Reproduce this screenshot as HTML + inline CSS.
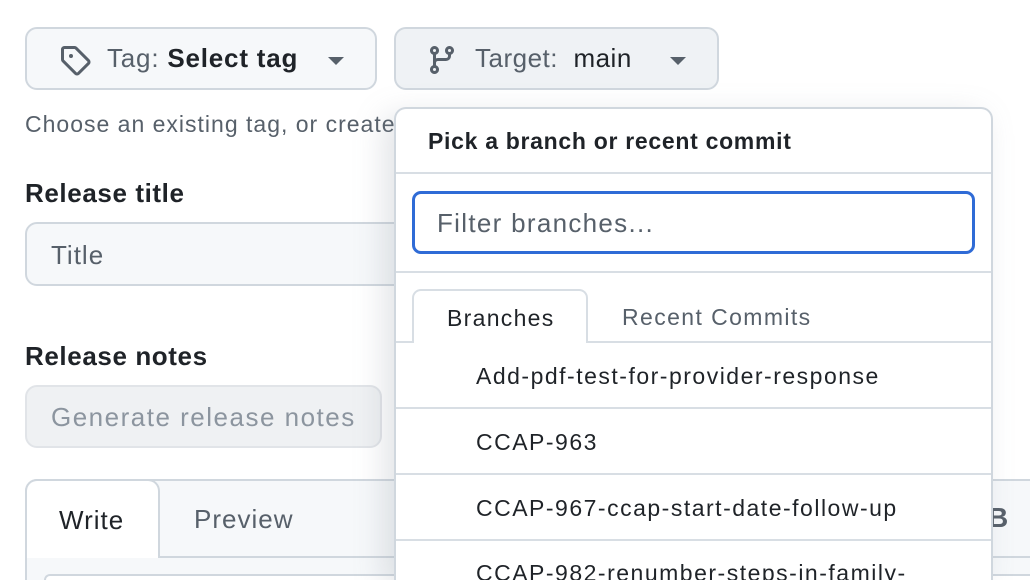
<!DOCTYPE html>
<html style="width:1030px;height:580px;overflow:hidden"><head><meta charset="utf-8"><style>
*{box-sizing:border-box;margin:0;padding:0}
body{width:1030px;height:580px;overflow:hidden;background:#fff;font-family:"Liberation Sans",sans-serif;position:relative;color:#1f2328;white-space:nowrap}
.abs{position:absolute}
.btn{position:absolute;border:2px solid #d0d7de;border-radius:12px;background:#f6f8fa;display:flex;align-items:center;font-size:26px;letter-spacing:.5px}
.caret{width:0;height:0;border-left:8px solid transparent;border-right:8px solid transparent;border-top:8px solid #57606a;position:absolute}
.lbl{position:absolute;font-weight:bold;font-size:26px;left:25px;letter-spacing:.6px}
.pop{position:absolute;left:394px;top:107px;width:599px;height:473px;background:#fff;border:2px solid #d0d7de;border-bottom:none;border-radius:12px 12px 0 0;box-shadow:-10px 8px 30px rgba(140,149,159,.25);overflow:hidden}
.sep{position:absolute;left:0;right:0;height:2px;background:#d8dee4}
.item{position:absolute;left:80px;font-size:23px;letter-spacing:1.5px;color:#1f2328}
</style></head><body>
<div class="btn" style="left:25px;top:27px;width:352px;height:63px">
<svg class="abs" style="left:32px;top:15px" width="32" height="32" viewBox="0 0 16 16"><path fill="#57606a" d="M1 7.775V2.75C1 1.784 1.784 1 2.75 1h5.025c.464 0 .91.184 1.238.513l6.25 6.25a1.75 1.75 0 0 1 0 2.474l-5.026 5.026a1.75 1.75 0 0 1-2.474 0l-6.25-6.25A1.752 1.752 0 0 1 1 7.775Zm1.5 0c0 .066.026.13.073.177l6.25 6.250a.25.25 0 0 0 .354 0l5.025-5.025a.25.25 0 0 0 0-.354l-6.25-6.25a.25.25 0 0 0-.177-.073H2.75a.25.25 0 0 0-.25.25ZM6 5a1 1 0 1 1 0 2 1 1 0 0 1 0-2Z"/></svg>
<span class="abs" style="left:80px;top:14px;color:#57606a;letter-spacing:.8px">Tag: <span style="color:#1f2328;font-weight:bold">Select tag</span></span>
<div class="caret" style="left:301px;top:28px"></div></div>
<div class="btn" style="left:394px;top:27px;width:325px;height:63px;background:#eff2f5">
<svg class="abs" style="left:30px;top:15px" width="32" height="32" viewBox="0 0 16 16"><path fill="#57606a" d="M9.5 3.25a2.25 2.25 0 1 1 3 2.122V6A2.5 2.5 0 0 1 10 8.5H6a1 1 0 0 0-1 1v1.128a2.251 2.251 0 1 1-1.5 0V5.372a2.25 2.250 0 1 1 1.5 0v1.836A2.493 2.493 0 0 1 6 7h4a1 1 0 0 0 1-1v-.628A2.25 2.25 0 0 1 9.5 3.25Zm-6 0a.75.75 0 1 0 1.5 0 .75.75 0 0 0-1.5 0Zm8.25-.75a.75.75 0 1 0 0 1.5.75.75 0 0 0 0-1.5ZM4.25 12a.75.75 0 1 0 0 1.5.75.75 0 0 0 0-1.5Z"/></svg>
<span class="abs" style="left:79px;top:14px;color:#57606a">Target:&nbsp; <span style="color:#1f2328">main</span></span>
<div class="caret" style="left:274px;top:28px"></div></div>
<div class="abs" style="left:25px;top:111px;font-size:23px;letter-spacing:1px;color:#57606a">Choose an existing tag, or create a new tag</div>
<div class="lbl" style="top:178px">Release title</div>
<div class="abs" style="left:25px;top:222px;width:420px;height:64px;border:2px solid #d0d7de;border-radius:12px;background:#f6f8fa;font-size:26px;letter-spacing:1px;color:#57606a;padding:16px 24px">Title</div>
<div class="lbl" style="top:341px">Release notes</div>
<div class="abs" style="left:25px;top:385px;width:357px;height:63px;border:2px solid #e1e4e8;border-radius:12px;background:#eff1f3;font-size:26px;letter-spacing:1.5px;color:#8c959f;padding:15px 24px">Generate release notes</div>
<div class="abs" style="left:25px;top:479px;width:1005px;height:101px;border:2px solid #d0d7de;border-bottom:none;border-right:none;border-radius:12px 0 0 0;background:#f6f8fa"></div>
<div class="abs" style="left:25px;top:556px;width:1005px;height:2px;background:#d0d7de"></div>
<div class="abs" style="left:25px;top:479px;width:135px;height:79px;border:2px solid #d0d7de;border-bottom:none;border-radius:12px 12px 0 0;background:#fff;font-size:26px;letter-spacing:1px;padding:24px 0 0 32px">Write</div>
<div class="abs" style="left:194px;top:504px;font-size:26px;letter-spacing:1px;color:#57606a">Preview</div>
<div class="abs" style="left:44px;top:574px;width:986px;height:6px;border:2px solid #d0d7de;border-bottom:none;border-right:none;border-radius:8px 0 0 0;background:#fff"></div>
<div class="abs" style="left:988px;top:502px;font-size:28px;font-weight:bold;color:#57606a">B</div>
<div class="pop">
<div class="abs" style="left:32px;top:19px;font-size:23px;letter-spacing:.7px;font-weight:bold">Pick a branch or recent commit</div>
<div class="sep" style="top:63px"></div>
<div class="abs" style="left:16px;top:82px;width:563px;height:63px;border:3px solid #2f6bd6;border-radius:9px;font-size:26px;letter-spacing:1.3px;color:#57606a;padding:14px 22px">Filter branches...</div>
<div class="sep" style="top:162px"></div>
<div class="sep" style="top:232px"></div>
<div class="abs" style="left:16px;top:180px;width:176px;height:54px;border:2px solid #d8dee4;border-bottom:none;border-radius:9px 9px 0 0;background:#fff;font-size:23px;letter-spacing:1.3px;padding:14px 0 0 33px">Branches</div>
<div class="abs" style="left:226px;top:195px;font-size:23px;letter-spacing:1.4px;color:#57606a">Recent Commits</div>
<div class="item" style="top:254px">Add-pdf-test-for-provider-response</div>
<div class="sep" style="top:298px"></div>
<div class="item" style="top:320px">CCAP-963</div>
<div class="sep" style="top:364px"></div>
<div class="item" style="top:386px">CCAP-967-ccap-start-date-follow-up</div>
<div class="sep" style="top:430px"></div>
<div class="item" style="top:451px">CCAP-982-renumber-steps-in-family-</div>
</div>
</body></html>
